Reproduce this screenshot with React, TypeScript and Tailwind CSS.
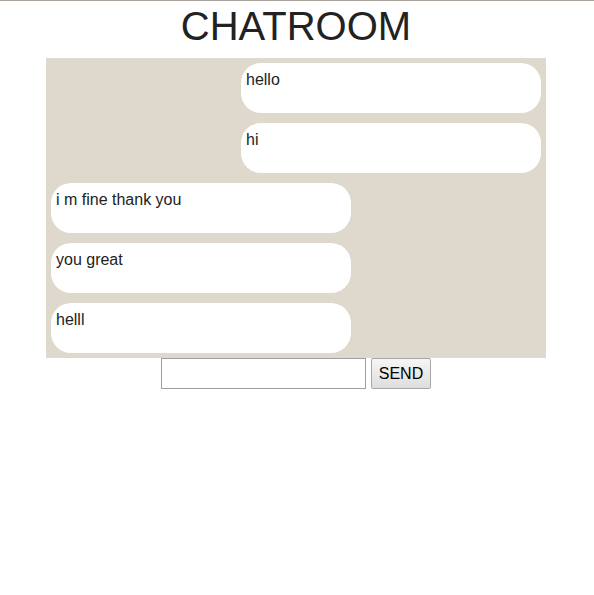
const messages = [
  { text: "hello", mine: true },
  { text: "hi", mine: true },
  { text: "i m fine thank you", mine: false },
  { text: "you great", mine: false },
  { text: "helll", mine: false },
];

export default function App() {
  return (
    <div className="min-h-screen bg-white font-['Liberation_Sans',Arial,sans-serif] text-[#222]">
      <div className="h-px bg-[#a8a29a]" />
      <div className="w-[592px]">
        <h1 className="pt-[2px] text-center text-[40px] leading-[46px] text-[#222]">CHATROOM</h1>
        <div className="mx-auto mt-[9px] flex w-[500px] flex-col gap-[10px] bg-[#ded8cd] p-[5px]">
          {messages.map((m, i) => (
            <div
              key={i}
              className={`h-[50px] w-[300px] rounded-[20px] bg-white px-[5px] pt-[8px] text-base leading-[18px] ${
                m.mine ? "self-end" : "self-start"
              }`}
            >
              {m.text}
            </div>
          ))}
        </div>
        <div className="flex justify-center gap-[5px]">
          <input type="text" className="h-[31px] w-[205px] border border-[#a0a0a0] bg-white px-1 outline-none" />
          <button className="h-[31px] w-[60px] rounded-[2px] border border-[#a8a8a8] bg-gradient-to-b from-[#f6f6f6] to-[#dedede] text-base text-black">
            SEND
          </button>
        </div>
      </div>
    </div>
  );
}
